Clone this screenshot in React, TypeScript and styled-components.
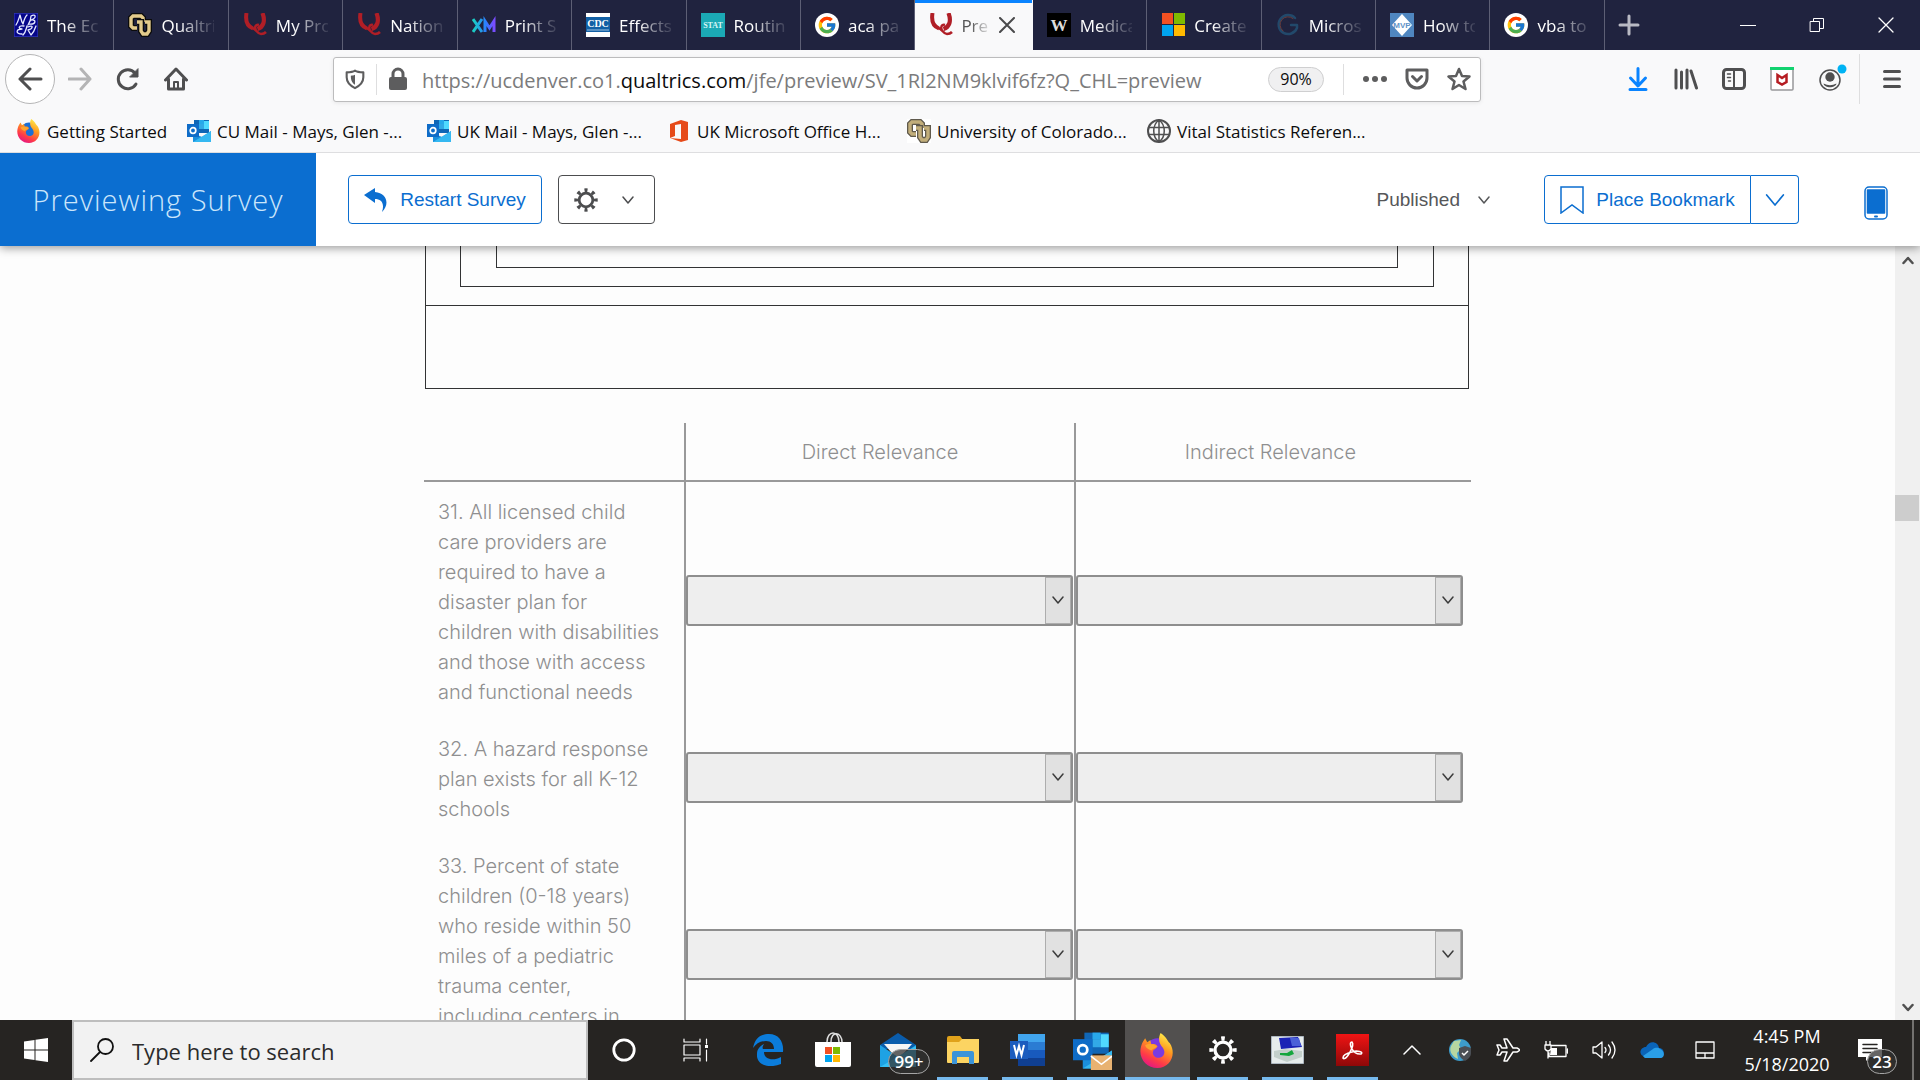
import React from "react";
import styled, { createGlobalStyle, css } from "styled-components";
import { FcGoogle } from "react-icons/fc";

const ui = `"Open Sans", "Noto Sans", sans-serif`;
const arial = `"Liberation Sans", Arial, sans-serif`;
const survey = `Inter, "Open Sans", sans-serif`;
const blue = "#0b6ed0";

const GlobalStyle = createGlobalStyle`
  * { box-sizing: border-box; }
  body { margin: 0; background: #fdfdfd; font-family: ${ui}; }
  button, input, select { font: inherit; color: inherit; margin: 0; }
  button { padding: 0; border: 0; background: none; cursor: pointer; display: flex; align-items: center; justify-content: center; }
  a { color: inherit; text-decoration: none; }
  svg { display: block; flex: none; }
`;

const Page = styled.div`
  display: flex;
  flex-direction: column;
  height: 100vh;
  overflow: hidden;
`;

/* ---------- tab strip ---------- */
const TabStrip = styled.div`
  display: flex;
  flex: none;
  height: 50px;
  background: #20233f;
`;
const TabList = styled.div`
  display: flex;
  flex: 1;
  min-width: 0;
`;
const Tab = styled.button<{ $active?: boolean }>`
  flex: 1 1 0;
  min-width: 0;
  justify-content: flex-start;
  gap: 9px;
  padding: 0 14px;
  color: #fff;
  font-size: 17px;
  border-right: 1px solid #5d5f75;
  ${(p) =>
    p.$active &&
    css`
      gap: 8px;
      padding-right: 17px;
      color: #555;
      background: #f9f9fa;
      box-shadow: inset 0 3px #0a84ff;
      border-right-color: #f9f9fa;
    `}
`;
const TabTitle = styled.span`
  flex: 1;
  min-width: 0;
  overflow: hidden;
  text-align: left;
  white-space: nowrap;
  mask-image: linear-gradient(to right, #000 35%, rgba(0, 0, 0, 0.5) 65%, rgba(0, 0, 0, 0.1) 100%);
`;
const WindowControls = styled.div`
  display: flex;
  flex: none;
`;
const WindowButton = styled.button<{ $wide?: boolean }>`
  width: ${(p) => (p.$wide ? 108 : 69)}px;
  padding-right: ${(p) => (p.$wide ? 60 : 0)}px;
`;

/* ---------- navigation bar ---------- */
const NavBar = styled.div`
  display: flex;
  flex: none;
  align-items: center;
  height: 58px;
  background: #f9f9fa;
  color: #4f4f50;
`;
const NavLeft = styled.div`
  display: flex;
  flex: none;
  align-items: center;
  width: 333px;
  padding-left: 5px;
`;
const BackButton = styled.button`
  width: 50px;
  height: 50px;
  margin-right: 1px;
  border: 1px solid #b5b5b6;
  border-radius: 50%;
  background: #fff;
`;
const ToolButton = styled.button`
  width: 48px;
  height: 48px;
`;
const NavRight = styled(NavLeft)`
  width: 439px;
  padding: 0 4px 0 0;
  justify-content: flex-end;
`;
const UrlBar = styled.div`
  display: flex;
  flex: 1;
  align-items: center;
  height: 45px;
  border: 1px solid #bcbcbd;
  border-radius: 3px;
  background: #fff;
  box-shadow: 0 1px 4px rgba(0, 0, 0, 0.08);
  color: #5d5d5e;
`;
const UrlButton = styled.button`
  width: 42px;
  height: 42px;
`;
const UrlText = styled.div`
  flex: 1;
  padding: 2px 0 0 3px;
  font-size: 20px;
  color: #7b7b7c;
  white-space: nowrap;
  b { font-weight: 400; color: #0c0c0d; }
`;
const ZoomLevel = styled.button`
  width: 56px;
  height: 25px;
  border: 1px solid #cfcfd0;
  border-radius: 13px;
  background: #f0f0f1;
  color: #0c0c0d;
  font-size: 16px;
`;
const Divider = styled.span<{ $h: number; $l?: number; $r?: number }>`
  width: 1px;
  height: ${(p) => p.$h}px;
  margin: 0 ${(p) => p.$r || 0}px 0 ${(p) => p.$l || 0}px;
  background: #dededf;
`;

/* ---------- bookmarks ---------- */
const BookmarkBar = styled.nav`
  display: flex;
  flex: none;
  height: 45px;
  padding-left: 17px;
  background: #f9f9fa;
  border-bottom: 1px solid #dedee0;
`;
const Bookmark = styled.a<{ $first?: boolean }>`
  display: flex;
  align-items: center;
  gap: 6px;
  width: ${(p) => (p.$first ? 170 : 240)}px;
  padding-top: 2px;
  font-size: 17px;
  color: #0c0c0d;
  white-space: nowrap;
`;

/* ---------- survey preview header ---------- */
const PreviewBar = styled.header`
  display: flex;
  flex: none;
  align-items: center;
  height: 93px;
  background: #fff;
  box-shadow: 0 2px 9px rgba(0, 0, 0, 0.4);
  clip-path: inset(0 0 -14px 0);
  z-index: 1;
  font-family: ${arial};
  font-size: 19px;
  color: #565759;
`;
const PreviewTitle = styled.h1`
  display: flex;
  align-items: center;
  justify-content: center;
  width: 316px;
  height: 100%;
  margin: 0 32px 0 0;
  background: ${blue};
  color: #cbe6fb;
  font: 300 29px ${ui};
  letter-spacing: 1px;
`;
const OutlineButton = styled.button<{ $w: number; $grey?: boolean }>`
  width: ${(p) => p.$w}px;
  height: 49px;
  gap: 12px;
  border: 1px solid ${(p) => (p.$grey ? "#4c4d4f" : blue)};
  border-radius: 4px;
  color: ${(p) => (p.$grey ? "#4c4d4f" : blue)};
  white-space: nowrap;
`;
const SettingsButton = styled(OutlineButton)`
  gap: 24px;
  margin-left: 16px;
  padding-right: 5px;
`;
const Published = styled.button`
  gap: 18px;
  margin: 0 54px 0 auto;
`;
const Split = styled.div`
  display: flex;
  margin-right: 65px;
  button:first-child { border-radius: 4px 0 0 4px; }
  button:last-child { border-radius: 0 4px 4px 0; border-left: 0; }
`;
const PhoneButton = styled.button`
  margin: 7px 32px 0 0;
`;

/* ---------- survey body ---------- */
const Body = styled.div`
  display: flex;
  flex: 1;
  min-height: 0;
  background: #fdfdfd;
`;
const Viewport = styled.main`
  flex: 1;
  min-width: 0;
  overflow: hidden;
`;
const Content = styled.div`
  width: 1047px;
  max-width: 100%;
  margin: 0 auto;
`;
const Outer = styled.div`
  margin: 0 2px 0 1px;
  border: 1px solid #323334;
  border-top: 0;
`;
const OuterTop = styled.div`
  padding: 0 34px 18px;
  border-bottom: 1px solid #323334;
`;
const Middle = styled.div`
  padding: 0 35px 18px;
  border: 1px solid #323334;
  border-top: 0;
`;
const Inner = styled.div`
  height: 22px;
  border: 1px solid #323334;
  border-top: 0;
`;
const OuterBottom = styled.div`
  height: 82px;
`;
const Matrix = styled.table`
  width: 100%;
  margin-top: 34px;
  table-layout: fixed;
  border-collapse: separate;
  border-spacing: 0;
  font-family: ${survey};
  font-weight: 300;
  font-size: 20px;
  line-height: 30px;
  color: #8f8f90;
`;
const Col = styled.col<{ $w?: number }>`
  width: ${(p) => (p.$w ? p.$w + "px" : "auto")};
`;
const HeadCell = styled.th<{ $last?: boolean }>`
  height: 59px;
  padding: 0 ${(p) => (p.$last ? 6 : 0)}px 0 0;
  font-weight: 300;
  border-bottom: 2px solid #99999a;
  & + & { border-left: 2px solid #99999a; }
`;
const Statement = styled.th<{ $tall?: boolean }>`
  height: ${(p) => (p.$tall ? "237px" : "auto")};
  padding: 15px 8px 12px 14px;
  font-weight: 300;
  text-align: left;
  vertical-align: top;
`;
const AnswerCell = styled.td<{ $last?: boolean }>`
  padding: 0 ${(p) => (p.$last ? 8 : 1)}px 0 0;
  border-left: 2px solid #99999a;
`;
const SelectWrap = styled.label`
  position: relative;
  display: block;
`;
const Select = styled.select`
  appearance: none;
  display: block;
  width: 100%;
  height: 51px;
  padding: 0 30px 0 8px;
  border: 2px solid #8e8e8e;
  border-radius: 3px;
  background: #eee;
`;
const SelectArrow = styled.span`
  position: absolute;
  top: 2px;
  right: 2px;
  bottom: 2px;
  display: flex;
  align-items: center;
  justify-content: center;
  width: 26px;
  padding-bottom: 2px;
  border: 1px solid #adadad;
  background: #e1e1e1;
  color: #3c3c3c;
  pointer-events: none;
`;
const Scrollbar = styled.div`
  display: flex;
  flex: none;
  flex-direction: column;
  align-items: center;
  width: 25px;
  padding: 10px 0 8px;
  background: #f0f0f0;
`;
const ScrollTrack = styled.div`
  flex: 1;
  display: flex;
  flex-direction: column;
  align-self: stretch;
  &::before { content: ""; flex: 323 1 0; }
  &::after { content: ""; flex: 677 1 0; }
`;
const ScrollThumb = styled.div`
  height: 26px;
  margin-right: 1px;
  background: #cdcdcd;
`;

/* ---------- taskbar ---------- */
const Taskbar = styled.footer`
  display: flex;
  flex: none;
  z-index: 1;
  height: 60px;
  background: #262422;
  color: #fff;
`;
const TaskButton = styled.button<{ $w?: number; $open?: boolean; $active?: boolean; $padRight?: number }>`
  position: relative;
  width: ${(p) => p.$w || 65}px;
  padding-right: ${(p) => p.$padRight || 0}px;
  background: ${(p) => (p.$active ? "#52504f" : "none")};
  &::after {
    content: "";
    display: ${(p) => (p.$open ? "block" : "none")};
    position: absolute;
    bottom: 0;
    left: ${(p) => (p.$active ? 0 : 7)}px;
    right: ${(p) => (p.$active ? 0 : 7)}px;
    height: 3px;
    background: #76b9ed;
  }
`;
const SearchBox = styled.label`
  display: flex;
  align-items: center;
  gap: 18px;
  width: 516px;
  padding-left: 16px;
  border: 2px solid #bebebe;
  background: #f2f2f2;
  color: #111;
`;
const SearchInput = styled.input`
  flex: 1;
  border: 0;
  padding: 2px 0 0;
  outline: 0;
  background: none;
  font-size: 22px;
  &::placeholder { color: #2b2b2b; opacity: 1; }
`;
const Apps = styled.div`
  display: flex;
  margin-left: 3px;
`;
const Tray = styled.div`
  display: flex;
  margin-left: auto;
`;
const Clock = styled.button`
  flex-direction: column;
  width: 108px;
  font-size: 18px;
  line-height: 28px;
`;
const Badge = styled.span<{ $w: number; $x: number }>`
  position: absolute;
  left: ${(p) => p.$x}px;
  top: 29px;
  width: ${(p) => p.$w}px;
  height: 25px;
  border: 1px solid #a5a5a5;
  border-radius: 13px;
  background: rgba(50, 50, 50, 0.75);
  font-size: 17px;
  font-weight: 600;
  line-height: 23px;
  text-align: center;
`;
const ShowDesktop = styled.button`
  width: 8px;
  border-left: 2px solid #73716f;
`;

/* ---------- drawings ---------- */
type IconProps = { w?: number; h?: number; box?: string; sw?: number; fill?: string; stroke?: string; children: React.ReactNode };
const Icon = ({ w = 24, h = w, box = "0 0 24 24", sw = 3, fill = "none", stroke = "currentColor", children }: IconProps) => (
  <svg width={w} height={h} viewBox={box} fill={fill} stroke={stroke} strokeWidth={sw} strokeLinecap="round" strokeLinejoin="round" aria-hidden="true">
    {children}
  </svg>
);
const Chevron = ({ w = 12, sw = 2 }: { w?: number; sw?: number }) => (
  <Icon w={w} h={w} box="0 0 12 12" sw={sw}><path d="M1 3l5 6 5-6" /></Icon>
);
const Gear = ({ w, sw = 3 }: { w: number; sw?: number }) => (
  <svg width={w} height={w} viewBox="0 0 26 26" fill="none" stroke="currentColor" aria-hidden="true">
    <circle cx="13" cy="13" r="7.4" strokeWidth={sw} />
    <circle cx="13" cy="13" r="10.7" strokeWidth="4" pathLength="160" strokeDasharray="8 12" strokeDashoffset="4" />
  </svg>
);
const Nber = () => (
  <Icon stroke="#e6eaff" sw={1.3}>
    <path d="M0 0h24v24H0z" fill="#06068a" stroke="#3036b4" />
    <path d="M2 12C4 9 5 5 6 2c1 3 1 6 3 9 1-4 2-7 4-9M14 12c2-3 3-6 3-9 5-3 6 2 0 4 6-1 5 5-2 4M10 13c-6-1-6 3-2 3-6 0-7 5 0 5M13 13c-1 3-1 6-4 9M14 14c6-3 5 2 0 3l3 5c3-3 4-6 5-9" />
  </Icon>
);
const CuLogo = ({ muted }: { muted?: boolean }) => {
  const dark = muted ? "#5f594c" : "#0b0b0b";
  const gold = muted ? "#c2ae7a" : "#e3cb8c";
  const c = "M15 9V5l-2-2H5L3 5v8l2 2h4";
  const u = "M9 9h4v9l2 3h4l2-3V9h-4";
  return (
    <svg width="24" height="24" viewBox="0 0 24 24" fill="none" aria-hidden="true">
      {muted && <path d="M0 0h24v24H0z" fill="#fff" />}
      <path d={c} stroke={dark} strokeWidth="6" /><path d={c} stroke={gold} strokeWidth="3.400" />
      <path d={u} stroke={dark} strokeWidth="6" /><path d={u} stroke={gold} strokeWidth="3.400" />
    </svg>
  );
};
const QLogo = () => (
  <svg width="24" height="24" viewBox="0 0 24 24" fill="none" stroke="#b01e26" aria-hidden="true">
    <path d="M3.500 0C2.500 6 3.500 13 10 15.500" strokeWidth="4" />
    <path d="M19.500 0c3 8 1 14-5 16" strokeWidth="4.200" />
    <path d="M13 17c-2-3 0-6 3-5" strokeWidth="2.400" />
    <path d="M9 15c4 0 5 6 9 6 3 0 4-1 5-2" strokeWidth="2.600" />
  </svg>
);
const XmLogo = () => (
  <svg width="24" height="24" viewBox="0 0 24 24" fill="none" strokeWidth="3" aria-hidden="true">
    <defs><linearGradient id="xm"><stop stopColor="#1ad0c0" /><stop offset=".6" stopColor="#2a80ff" /><stop offset="1" stopColor="#7a4cff" /></linearGradient></defs>
    <path d="M1 6l9 13M10 6L1 19M13 19V8l4.500 7L22 8v11" stroke="url(#xm)" />
  </svg>
);
const Plate = ({ bg, fg, label, size, serif }: { bg: string; fg: string; label: string; size: number; serif?: boolean }) => (
  <svg width="24" height="24" viewBox="0 0 24 24" aria-hidden="true">
    <path d="M0 0h24v24H0z" fill={bg} />
    <text x="12" y={12 + size / 3} textAnchor="middle" fontSize={size} fontWeight="700" fill={fg} fontFamily={serif ? '"Liberation Serif", serif' : arial}>{label}</text>
  </svg>
);
const Cdc = () => (
  <svg width="24" height="24" viewBox="0 0 24 24" aria-hidden="true">
    <path d="M0 0h24v24H0z" fill="#fff" /><path d="M0 4h24v15H0z" fill="#1260a5" />
    <text x="12" y="14" textAnchor="middle" fontSize="10" fontWeight="700" fill="#fff" fontFamily='"Liberation Serif", serif'>CDC</text>
    <path d="M1 17h22" stroke="#9fc2e0" />
  </svg>
);
const Mvp = () => (
  <svg width="24" height="24" viewBox="0 0 24 24" aria-hidden="true">
    <path d="M0 0h24v24H0z" fill="#4f86c0" /><path d="M12 1l10 11-10 11L2 12z" fill="#fff" />
    <text x="12" y="15" textAnchor="middle" fontSize="8" fontWeight="700" fill="#5f93c8" fontFamily={arial}>MVP</text>
  </svg>
);
const GoogleTab = () => (
  <svg width="24" height="24" viewBox="0 0 24 24" aria-hidden="true"><circle cx="12" cy="12" r="12" fill="#fff" /><FcGoogle x="2" y="2" size={20} /></svg>
);
const MsLogo = () => (
  <svg width="24" height="24" viewBox="0 0 24 24" aria-hidden="true">
    <path d="M1 0h11v11H1z" fill="#f25022" /><path d="M13 0h11v11H13z" fill="#7fba00" /><path d="M1 12h11v11H1z" fill="#00a4ef" /><path d="M13 12h11v11H13z" fill="#ffb900" />
  </svg>
);
const DarkRing = () => (
  <Icon sw={2.500}><path d="M19 5A9.500 9.500 0 1 0 21 15M21 15v-3h-6" stroke="#22496b" /><path d="M17 5.500A8 8 0 0 0 7 18" stroke="#6b3d3d" strokeWidth="1" /></Icon>
);
const Firefox = ({ size, modern }: { size: number; modern?: boolean }) => {
  const id = modern ? "ffm" : "ffc";
  return (
    <svg width={size} height={size} viewBox="0 0 34 34" aria-hidden="true">
      <defs>
        <linearGradient id={id} x1=".8" y1="0" x2=".3" y2="1"><stop stopColor="#fff44f" /><stop offset=".4" stopColor="#ff9a1f" /><stop offset=".75" stopColor="#ff3b47" /><stop offset="1" stopColor="#e31587" /></linearGradient>
      </defs>
      <circle cx="17" cy="17" r="12" fill={modern ? "#7a3be0" : "#1c6fd6"} />
      <path d="M20 0c6 4 6 7 9 10 7 11 0 24-12 24C6 34-2 24 1 13c1-4 3-6 4-8l2 4 3-2 1 4c3-1 5 0 6 2-1 2-4 3-4 4-2 4 2 8 6 7 5-1 6-6 3-10-3-3-5-8-2-14z" fill={`url(#${id})`} />
      <path d="M5 12c3-2 7-2 11 1-1 2-4 2-5 4-3-1-5-2-6-5z" fill="#ffa52e" />
    </svg>
  );
};
const Outlook = ({ size = 24, mail }: { size?: number; mail?: boolean }) => (
  <svg width={size} height={size} viewBox="0 0 24 24" aria-hidden="true">
    <path d="M7 1h15v13H7z" fill="#1066b5" /><path d="M12 5h5v5h-5z" fill="#32a9e7" /><path d="M17 2h5v8h-5z" fill="#50d9ff" /><path d="M12 1h5v4h-5z" fill="#28a8ea" />
    <path d="M6 14l9 4 9-6v11H6z" fill="#1b8fdc" /><path d="M6 23l18-11v11z" fill="#35b8f1" />
    <path d="M0 5h12v13H0z" fill="#0f6cc7" />
    <circle cx="6" cy="11.500" r="2.800" fill="none" stroke="#fff" strokeWidth="1.700" />
    {mail && <><path d="M11 15h13v9H11z" fill="#e8b271" /><path d="M11 15.500l6.500 5 6.500-5" fill="none" stroke="#fff" /></>}
  </svg>
);
const Office = () => (
  <svg width="24" height="24" viewBox="0 0 24 24" aria-hidden="true"><path d="M3 5l11-4 7 2v18l-7 2-11-4 11 1V5L8 6v11l-5 2z" fill="#e64a19" /></svg>
);
const Globe = () => (
  <Icon stroke="#4f4f50" sw={2}><circle cx="12" cy="12" r="11" /><path d="M12 1v22M1.500 8.500h21M1.500 15.500h21M12 1C5 6 5 18 12 23M12 1c7 5 7 17 0 22" strokeWidth="1.500" /></Icon>
);
const Word = () => (
  <svg width="36" height="34" viewBox="0 0 36 34" aria-hidden="true">
    <path d="M8 1h27v8H8z" fill="#41a5ee" /><path d="M8 9h27v8H8z" fill="#2b7cd3" /><path d="M8 17h27v8H8z" fill="#185abd" /><path d="M8 25h27v8H8z" fill="#103f91" />
    <path d="M0 8h18v18H0z" fill="#1b5cbe" />
    <path d="M4 12l2.500 10L9 13l2.500 9L14 12" fill="none" stroke="#fff" strokeWidth="2" />
  </svg>
);

const tabs: { title: string; icon: React.ReactNode; active?: boolean }[] = [
  { title: "The Ec", icon: <Nber /> },
  { title: "Qualtri", icon: <CuLogo /> },
  { title: "My Pro", icon: <QLogo /> },
  { title: "Nation", icon: <QLogo /> },
  { title: "Print S", icon: <XmLogo /> },
  { title: "Effects", icon: <Cdc /> },
  { title: "Routin", icon: <Plate bg="#1ba9b5" fg="#d9f5f5" label="STAT" size={8} serif /> },
  { title: "aca pa", icon: <GoogleTab /> },
  { title: "Pre", icon: <QLogo />, active: true },
  { title: "Medica", icon: <Plate bg="#000" fg="#ddd" label="W" size={17} serif /> },
  { title: "Create", icon: <MsLogo /> },
  { title: "Micros", icon: <DarkRing /> },
  { title: "How to", icon: <Mvp /> },
  { title: "vba to", icon: <GoogleTab /> },
];

const bookmarks = [
  { title: "Getting Started", icon: <Firefox size={24} /> },
  { title: "CU Mail - Mays, Glen -...", icon: <Outlook /> },
  { title: "UK Mail - Mays, Glen -...", icon: <Outlook /> },
  { title: "UK Microsoft Office H...", icon: <Office /> },
  { title: "University of Colorado...", icon: <CuLogo muted /> },
  { title: "Vital Statistics Referen...", icon: <Globe /> },
];

const statements = [
  ["31. All licensed child", "care providers are", "required to have a", "disaster plan for", "children with disabilities", "and those with access", "and functional needs"],
  ["32. A hazard response", "plan exists for all K-12", "schools"],
  ["33. Percent of state", "children (0-18 years)", "who reside within 50", "miles of a pediatric", "trauma center,", "including centers in"],
];

const Answer = ({ label, last }: { label: string; last?: boolean }) => (
  <AnswerCell $last={last}>
    <SelectWrap>
      <Select aria-label={label} defaultValue=""><option value="" /></Select>
      <SelectArrow><Chevron sw={1.500} /></SelectArrow>
    </SelectWrap>
  </AnswerCell>
);

export default function App() {
  return (
    <Page>
      <GlobalStyle />
      <TabStrip>
        <TabList>
          {tabs.map((t, i) => (
            <Tab key={i} $active={t.active}>
              {t.icon}
              <TabTitle>{t.title}</TabTitle>
              {t.active && <Icon w={16} box="0 0 16 16" sw={2} stroke="#4a4a4b"><path d="M1 1l14 14M15 1L1 15" /></Icon>}
            </Tab>
          ))}
        </TabList>
        <WindowControls>
          <WindowButton $wide aria-label="New tab"><Icon w={22} box="0 0 22 22" stroke="#b9bac4"><path d="M11 2v18M2 11h18" /></Icon></WindowButton>
          <WindowButton aria-label="Minimize"><Icon w={16} box="0 0 16 16" sw={1} stroke="#fff"><path d="M0 8.500h16" /></Icon></WindowButton>
          <WindowButton aria-label="Restore"><Icon w={16} box="0 0 16 16" sw={1} stroke="#fff"><path d="M1.500 4.500h9v10h-9zM4.500 4V1.500h10v10H11" /></Icon></WindowButton>
          <WindowButton aria-label="Close"><Icon w={16} box="0 0 16 16" sw={1.300} stroke="#fff"><path d="M1 1l14 14M15 1L1 15" /></Icon></WindowButton>
        </WindowControls>
      </TabStrip>

      <NavBar>
        <NavLeft>
          <BackButton aria-label="Back"><Icon w={26} h={24}><path d="M23 12H2M12 2L2 12l10 10" /></Icon></BackButton>
          <ToolButton aria-label="Forward"><Icon stroke="#b4b4b5"><path d="M1 12h21M13 2l9 10-9 10" /></Icon></ToolButton>
          <ToolButton aria-label="Reload"><Icon><path d="M20 17A9.500 9.500 0 1 1 19 6" /><path d="M22 2v8h-8z" fill="currentColor" strokeWidth="1" /></Icon></ToolButton>
          <ToolButton aria-label="Home"><Icon><path d="M1.500 13L12 2l10.500 11M4.500 12v10h15V12" /><path d="M10 21v-6h4v6" strokeWidth="2" /></Icon></ToolButton>
        </NavLeft>
        <UrlBar>
          <UrlButton aria-label="Tracking protection"><Icon w={20} h={22} sw={2.500}><path d="M12 2C9 4 6 4 2 4v6c0 6 4 10 10 13 6-3 10-7 10-13V4c-4 0-7 0-10-2z" /><path d="M12 7c-2 1-3 1-5 1 0 5 1 8 5 11z" fill="currentColor" stroke="none" /></Icon></UrlButton>
          <Divider $h={31} />
          <UrlButton aria-label="Site information"><Icon w={20} h={24} box="0 0 20 24"><path d="M5 11V7a5 5 0 0 1 10 0v4" /><rect x="1" y="10" width="18" height="13" rx="2" fill="currentColor" stroke="none" /></Icon></UrlButton>
          <UrlText role="textbox" aria-label="Address">https://ucdenver.co1.<b>qualtrics.com</b>/jfe/preview/SV_1Rl2NM9klvif6fz?Q_CHL=preview</UrlText>
          <ZoomLevel>90%</ZoomLevel>
          <Divider $h={31} $l={19} $r={10} />
          <UrlButton aria-label="Page actions"><Icon fill="currentColor" stroke="none"><circle cx="3" cy="12" r="3" /><circle cx="12" cy="12" r="3" /><circle cx="21" cy="12" r="3" /></Icon></UrlButton>
          <UrlButton aria-label="Save to Pocket"><Icon><path d="M2 3h20v8a10 10 0 0 1-20 0z" /><path d="M7.500 9.500L12 14l4.500-4.500" /></Icon></UrlButton>
          <UrlButton aria-label="Bookmark this page"><Icon sw={2.500}><path d="M12 2l3 7 7.500.5-6 5 2 7.500-6.500-4-6.500 4 2-7.500-6-5L9 9z" /></Icon></UrlButton>
        </UrlBar>
        <NavRight>
          <ToolButton aria-label="Downloads"><Icon stroke="#0a84ff"><path d="M12 1.500V17M4.500 11l7.500 8 7.500-8M4 22.500h16" /></Icon></ToolButton>
          <ToolButton aria-label="Library"><Icon><path d="M2 3v18M7.500 5v16M13 3v18M17 4l5.500 17" /></Icon></ToolButton>
          <ToolButton aria-label="Sidebars"><Icon><rect x="1.500" y="2.500" width="21" height="19" rx="3" /><path d="M12 3v18" strokeWidth="2" /><path d="M5.500 7h3M5.500 10.500h3M6.500 14h2" strokeWidth="1.500" /></Icon></ToolButton>
          <ToolButton aria-label="WebAdvisor"><Icon sw={1.500}><rect x="1" y="1" width="22" height="22" rx="1" fill="#fff" stroke="#98989a" /><path d="M0 1.500h24" stroke="#12d26f" strokeWidth="3" strokeLinecap="butt" /><path d="M7.500 8l4.500 3 4.500-3v7l-4.500 2.500-4.500-2.500z" stroke="#b51c22" strokeWidth="2.500" strokeLinejoin="miter" /></Icon></ToolButton>
          <ToolButton aria-label="Account"><Icon w={36} box="0 0 36 36" sw={1.500}><circle cx="18" cy="19" r="10" /><circle cx="18" cy="16" r="4.700" fill="currentColor" stroke="none" /><path d="M11.500 22.500q6.500 3.500 13 0c-1 5-12 5-13 0z" fill="currentColor" stroke="none" /><circle cx="30" cy="8" r="4.500" fill="#00b3f4" stroke="none" /></Icon></ToolButton>
          <Divider $h={50} $l={5} $r={8} />
          <ToolButton aria-label="Menu"><Icon><path d="M4.500 4.500h15M4.500 12h15M4.500 19.500h15" /></Icon></ToolButton>
        </NavRight>
      </NavBar>

      <BookmarkBar>
        {bookmarks.map((b, i) => (
          <Bookmark key={i} href="#" $first={i === 0}>{b.icon}{b.title}</Bookmark>
        ))}
      </BookmarkBar>

      <PreviewBar>
        <PreviewTitle>Previewing Survey</PreviewTitle>
        <OutlineButton $w={194}>
          <Icon fill="currentColor" stroke="none"><path d="M0 7l11-7v4c12 1 15 12 7 20 3-9-1-13-7-13v4z" /></Icon>
          Restart Survey
        </OutlineButton>
        <SettingsButton $w={97} $grey aria-label="Tools"><Gear w={24} /><Chevron sw={1.500} /></SettingsButton>
        <Published>Published<Chevron sw={1.500} /></Published>
        <Split>
          <OutlineButton $w={207}>
            <Icon w={24} h={28} box="0 0 24 28" sw={1.500}><path d="M1 1h22v26l-11-8-11 8z" strokeLinejoin="miter" /></Icon>
            Place Bookmark
          </OutlineButton>
          <OutlineButton $w={48} aria-label="Bookmark options"><Chevron w={20} sw={1} /></OutlineButton>
        </Split>
        <PhoneButton aria-label="Mobile view">
          <Icon w={24} h={34} box="0 0 24 34" sw={1.500} stroke={blue}><rect x="1" y="1" width="22" height="32" rx="4" /><path d="M3.500 4h17v23h-17z" fill={blue} /><path d="M11 30.500h2" strokeWidth="2" /></Icon>
        </PhoneButton>
      </PreviewBar>

      <Body>
        <Viewport>
          <Content>
            <Outer>
              <OuterTop><Middle><Inner /></Middle></OuterTop>
              <OuterBottom />
            </Outer>
            <Matrix>
              <colgroup><Col $w={260} /><Col $w={390} /><Col /></colgroup>
              <thead>
                <tr><HeadCell aria-label="Statement" /><HeadCell scope="col">Direct Relevance</HeadCell><HeadCell scope="col" $last>Indirect Relevance</HeadCell></tr>
              </thead>
              <tbody>
                {statements.map((lines, i) => (
                  <tr key={i}>
                    <Statement scope="row" $tall={i === 2}>{lines.map((l, j) => <React.Fragment key={j}>{j > 0 && <br />}{l}</React.Fragment>)}</Statement>
                    <Answer label={`Direct relevance, statement ${31 + i}`} />
                    <Answer label={`Indirect relevance, statement ${31 + i}`} last />
                  </tr>
                ))}
              </tbody>
            </Matrix>
          </Content>
        </Viewport>
        <Scrollbar>
          <Icon w={12} h={9} box="0 0 12 9" stroke="#505050" sw={2.500}><path d="M1.500 7L6 2l4.500 5" /></Icon>
          <ScrollTrack><ScrollThumb /></ScrollTrack>
          <Icon w={12} h={9} box="0 0 12 9" stroke="#505050" sw={2.500}><path d="M1.500 2L6 7l4.500-5" /></Icon>
        </Scrollbar>
      </Body>

      <Taskbar>
        <TaskButton $w={72} aria-label="Start"><Icon fill="#fff" stroke="none"><path d="M0 3.500L10.500 2v9.500H0zM11.500 1.800L24 0v11.500H11.500zM0 12.500h10.500V22L0 20.500zM11.500 12.500H24V24l-12.500-1.800z" /></Icon></TaskButton>
        <SearchBox>
          <Icon sw={1.800}><circle cx="15.500" cy="8.500" r="7.500" /><path d="M10 14L1 23" /></Icon>
          <SearchInput placeholder="Type here to search" aria-label="Search" />
        </SearchBox>
        <TaskButton $w={72} aria-label="Cortana"><Icon sw={2.800}><circle cx="12" cy="12" r="10.200" /></Icon></TaskButton>
        <TaskButton $w={72} aria-label="Task view"><Icon w={26} h={24} box="0 0 26 24" sw={1.200}><path d="M1 1v3h16V1M1 7h16v10H1zM1 23v-3h16v3M23.500 1v5M23.500 12v11" /><path d="M22 7h3v3h-3z" fill="#fff" stroke="none" /></Icon></TaskButton>
        <Apps>
          <TaskButton aria-label="Edge"><Icon w={32} box="0 0 32 32" fill="#0b7cdb" stroke="none"><path d="M1 14C3 4 9 0 17 0c10 0 15 8 14 18H12c0 8 10 9 17 5v7C17 35 4 31 5 20c0-5 3-8 7-10-1 2-2 3-1 5h11c0-5-3-8-8-8C8 7 4 10 1 14z" /></Icon></TaskButton>
          <TaskButton aria-label="Store"><svg width="36" height="36" viewBox="0 0 36 36" aria-hidden="true"><path d="M12 10c0-12 12-12 12 0M16 10c0-12 11-10 11 0" fill="none" stroke="#ddd" strokeWidth="1.500" /><path d="M0 10h36v23q0 2-2 2H2q-2 0-2-2z" fill="#fff" /><path d="M10 15h7v7h-7z" fill="#f25022" /><path d="M18 15h7v7h-7z" fill="#7fba00" /><path d="M10 23h7v7h-7z" fill="#00a4ef" /><path d="M18 23h7v7h-7z" fill="#ffb900" /></svg></TaskButton>
          <TaskButton aria-label="Mail"><svg width="36" height="34" viewBox="0 0 36 34" aria-hidden="true"><path d="M0 12L18 0l18 12v4H0z" fill="#0a5cab" /><path d="M4 11h28L18 27z" fill="#f5f5f5" /><path d="M0 12l18 12 18-12v22H0z" fill="#1ea2e4" /><path d="M0 34l36-21v21z" fill="#35c0f5" /></svg><Badge $w={42} $x={23}>99+</Badge></TaskButton>
          <TaskButton $open aria-label="File Explorer"><svg width="32" height="28" viewBox="0 0 32 28" aria-hidden="true"><path d="M0 2q0-2 2-2h11l3 4v22H0z" fill="#e0a21b" /><path d="M0 6h12l3-3h17v23q0 1-1 1H1q-1 0-1-1z" fill="#fcd462" /><path d="M5 28V17q0-2 2-2h18q2 0 2 2v11h-5v-7H10v7z" fill="#3b94d9" /></svg></TaskButton>
          <TaskButton $open aria-label="Word"><Word /></TaskButton>
          <TaskButton $open aria-label="Outlook"><Outlook size={39} mail /></TaskButton>
          <TaskButton $open $active aria-label="Firefox"><Firefox size={35} modern /></TaskButton>
          <TaskButton $open aria-label="Settings"><Gear w={28} /></TaskButton>
          <TaskButton $open aria-label="Remote session"><svg width="33" height="28" viewBox="0 0 33 28" aria-hidden="true"><path d="M.5.5h32v27H.5z" fill="#e6ecec" stroke="#aeb8c2" /><path d="M8 2l19-1 4 10-21 2z" fill="#1a22b5" /><path d="M19 2h9l2 8h-9z" fill="#4a60d8" /><path d="M3 15l11-2 17 2v6l-15 5-13-5z" fill="#c3cfcb" /><path d="M9 17h7l5-3 2 4-5 2-9-1z" fill="#14a63c" /></svg></TaskButton>
          <TaskButton $open aria-label="Acrobat"><svg width="33" height="32" viewBox="0 0 33 32" aria-hidden="true"><defs><linearGradient id="acro" x2="0" y2="1"><stop stopColor="#f01414" /><stop offset="1" stopColor="#8d0808" /></linearGradient></defs><path d="M0 0h33v32H0z" fill="url(#acro)" /><path d="M7 24c3 4 12-13 9-16-4 0 0 13 9 12 3-2-4-4-9-2-5 1-9 3-9 6z" fill="none" stroke="#fff" strokeWidth="1.600" /></svg></TaskButton>
        </Apps>
        <Tray>
          <TaskButton $w={48} aria-label="Show hidden icons"><Icon w={18} h={12} box="0 0 18 12" sw={1.500}><path d="M1 10l8-8 8 8" /></Icon></TaskButton>
          <TaskButton $w={48} aria-label="Network protection"><svg width="22" height="22" viewBox="0 0 22 22" aria-hidden="true"><circle cx="11" cy="11" r="11" fill="#3d9ccb" /><path d="M5 2l7-1-2 5 2 4-4 4 1 6C2 17 0 11 2 7z" fill="#b7d7a0" /><path d="M10 9l6-2 6 2v5c0 4-3 6-6 8-3-2-6-4-6-8z" fill="#4b4f55" /><path d="M13 14l2 2 4-4" fill="none" stroke="#fff" strokeWidth="1.500" /></svg></TaskButton>
          <TaskButton $w={48} aria-label="Airplane mode"><Icon sw={1.500}><path d="M1 7h3l2 3h5L8 1h3l6 9h4q5 2 0 4h-4l-6 9H8l3-9H6l-2 3H1l2-5z" /></Icon></TaskButton>
          <TaskButton $w={48} aria-label="Battery"><Icon w={24} h={18} box="0 0 24 18" sw={1.300}><path d="M8 4.500h14v11H5V12M23.500 8v4M2 0v4M6 0v4M1 4h6v4q-3 4-6 0zM4 10v7" /><path d="M7 7h6v7H6z" fill="#fff" stroke="none" /></Icon></TaskButton>
          <TaskButton $w={48} aria-label="Volume"><Icon w={24} h={20} box="0 0 24 20" sw={1.300}><path d="M1 7h3l6-5v16l-6-5H1zM13 7.500q2 2.500 0 5M16.500 5q4 5 0 10M20 2q6 8 0 16" /></Icon></TaskButton>
          <TaskButton $w={48} aria-label="OneDrive"><svg width="24" height="16" viewBox="0 0 24 16" aria-hidden="true"><path d="M3 14C-2 11 1 5 6 5c3-7 12-6 13 1 6 0 6 8 2 10H5z" fill="#0a64b8" /><path d="M3 14l10-7c3-2 6-1 7 0 5 2 5 8 1 9H5z" fill="#2a9fe8" /></svg></TaskButton>
          <TaskButton $w={57} aria-label="Touchpad"><Icon w={20} h={18} box="0 0 20 18" sw={1.300}><path d="M1 1h18v16H1zM1 12h18M10 12v5" /></Icon></TaskButton>
          <Clock><span>4:45 PM</span><span>5/18/2020</span></Clock>
          <TaskButton $w={71} $padRight={13} aria-label="Notifications"><Icon w={24} h={22} box="0 0 24 22" sw={1.500} stroke="#262422"><path d="M0 0h24v18H12l-4 4v-4H0z" fill="#fff" stroke="none" /><path d="M5 5.500h14M5 9.500h14M5 13.500h9" /></Icon><Badge $w={30} $x={26}>23</Badge></TaskButton>
          <ShowDesktop aria-label="Show desktop" />
        </Tray>
      </Taskbar>
    </Page>
  );
}
